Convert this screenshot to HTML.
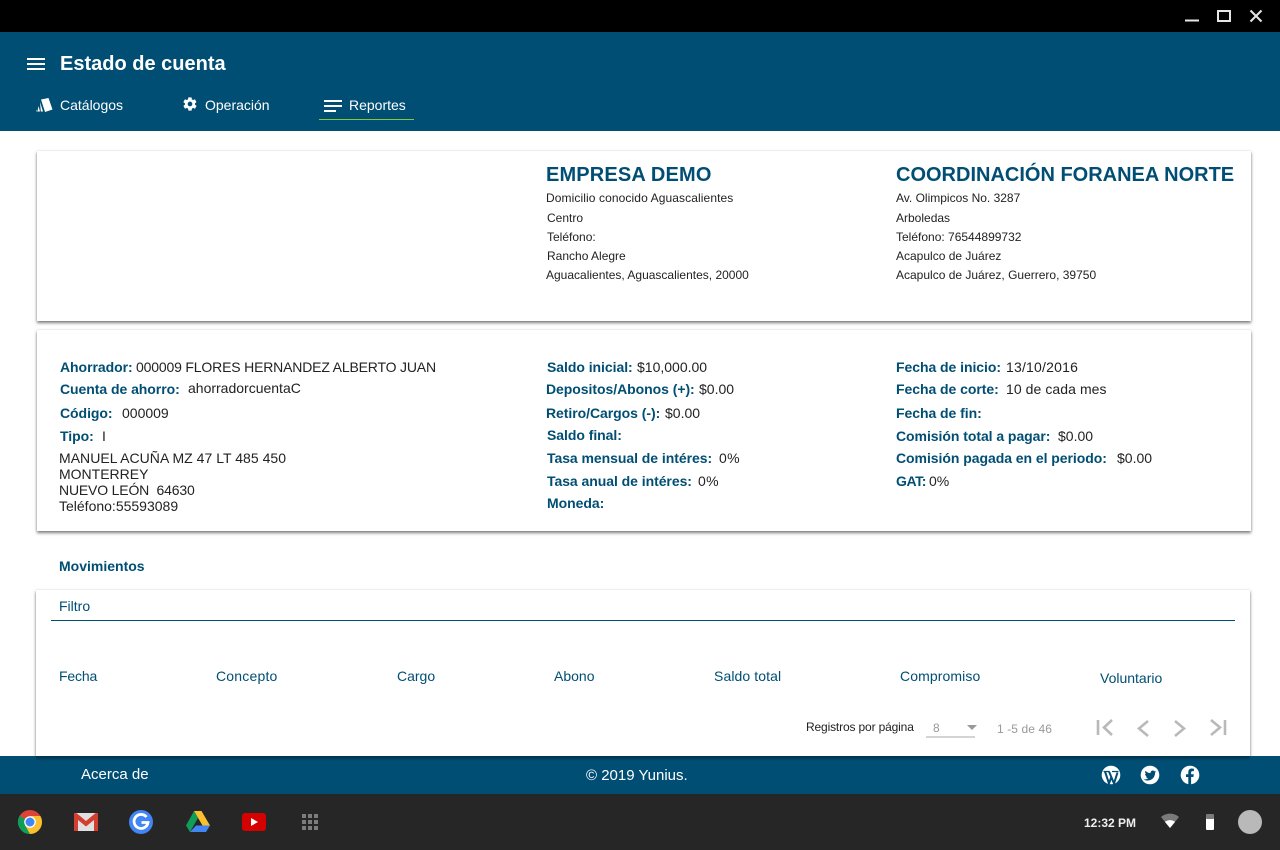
<!DOCTYPE html>
<html lang="es"><head><meta charset="utf-8"><title>Estado de cuenta</title>
<style>
html,body{margin:0;padding:0;width:1280px;height:850px;overflow:hidden;background:#fff;font-family:"Liberation Sans",sans-serif;color:#222}
div,span.a{position:absolute}
.t{position:absolute;white-space:nowrap;line-height:16px;font-size:14px}
.b{font-weight:bold;color:#004e74;letter-spacing:-.05px}
.s{font-size:12px}
.h{font-size:20px;font-weight:bold;color:#004e74;line-height:24px}
.c{color:#004e74}
.w{color:#fff}
.card{background:#fff;box-shadow:0 2px 3px rgba(0,0,0,.5),0 0 2px rgba(0,0,0,.12)}
svg{position:absolute;overflow:visible}
</style></head><body>
<div style="left:0;top:0;width:1280px;height:32px;background:#000"></div>
<svg style="left:0;top:0" width="1280" height="32" fill="none" stroke="#e6e6e6" stroke-width="2"><path d="M1185 20.500h14"/><rect x="1218" y="11" width="12" height="10"/><path d="M1250.500 10.500l11 11M1261.500 10.500l-11 11"/></svg>

<div style="left:0;top:32px;width:1280px;height:99px;background:#004e74"></div>
<svg style="left:0;top:0" width="50" height="80" fill="#fff"><rect x="27" y="58" width="18" height="2"/><rect x="27" y="63" width="18" height="2"/><rect x="27" y="68" width="18" height="2"/></svg>
<span class="t w" style="left:60px;top:52px;font-size:20px;font-weight:bold;line-height:24px">Estado de cuenta</span>
<svg style="left:36px;top:97px" width="18" height="16" fill="#fff"><path d="M5 2.500L12.500 1 16.500 12.500 9 15z"/><path d="M4 5L7 14.500H4.800zM2.500 9L4 14.500H1.500zM.5 12.500L1.500 14.500H.5z"/></svg>
<span class="t w" style="left:60px;top:97px">Catálogos</span>
<svg style="left:182px;top:96px" width="16" height="16" viewBox="0 0 24 24" fill="#fff"><path fill-rule="evenodd" d="M19.400 13c.1-.3.100-.7.100-1s0-.7-.1-1l2.100-1.600c.2-.2.200-.4.100-.6l-2-3.500c-.1-.2-.4-.3-.6-.2l-2.500 1c-.5-.4-1.100-.7-1.700-1l-.4-2.700c0-.2-.2-.4-.5-.4h-4c-.2 0-.5.200-.5.400l-.4 2.700c-.6.200-1.200.6-1.700 1l-2.500-1c-.2-.1-.5 0-.6.200l-2 3.500c-.1.200-.1.500.1.600L4.500 11c0 .3-.1.700-.1 1s0 .7.100 1l-2.100 1.600c-.2.200-.2.400-.1.600l2 3.500c.1.200.4.300.6.200l2.500-1c.5.400 1.100.7 1.700 1l.4 2.700c0 .2.300.4.500.4h4c.3 0 .5-.2.500-.4l.4-2.700c.6-.2 1.200-.6 1.700-1l2.500 1c.2.100.5 0 .6-.2l2-3.500c.1-.2.100-.4-.1-.6zM12 15.500a3.500 3.500 0 1 1 0-7 3.500 3.500 0 0 1 0 7z"/></svg>
<span class="t w" style="left:205px;top:97px">Operación</span>
<svg style="left:324px;top:100px" width="18" height="12" fill="#fff"><rect width="18" height="2"/><rect y="5" width="18" height="2"/><rect y="10" width="12" height="2"/></svg>
<span class="t w" style="left:349px;top:97px">Reportes</span>
<div style="left:319px;top:119px;width:95px;height:1px;background:#8cc63f"></div>

<div class="card" style="left:37px;top:151px;width:1214px;height:170px"></div>
<span class="t h" style="left:546px;top:163px;letter-spacing:.15px">EMPRESA DEMO</span>
<span class="t s" style="left:546px;top:190px;letter-spacing:.1px">Domicilio conocido Aguascalientes</span>
<span class="t s" style="left:547px;top:210px">Centro</span>
<span class="t s" style="left:547px;top:229px">Teléfono:</span>
<span class="t s" style="left:547px;top:248px">Rancho Alegre</span>
<span class="t s" style="left:546px;top:267px">Aguacalientes, Aguascalientes, 20000</span>
<span class="t h" style="left:896px;top:163px">COORDINACIÓN FORANEA NORTE</span>
<span class="t s" style="left:896px;top:190px">Av. Olimpicos No. 3287</span>
<span class="t s" style="left:896px;top:210px">Arboledas</span>
<span class="t s" style="left:896px;top:229px">Teléfono: 76544899732</span>
<span class="t s" style="left:896px;top:248px">Acapulco de Juárez</span>
<span class="t s" style="left:896px;top:267px">Acapulco de Juárez, Guerrero, 39750</span>

<div class="card" style="left:37px;top:330px;width:1214px;height:201px"></div>
<span class="t b" style="left:60px;top:359px">Ahorrador:</span><span class="t" style="left:136px;top:359px;letter-spacing:-.17px">000009 FLORES HERNANDEZ ALBERTO JUAN</span>
<span class="t b" style="left:60px;top:381px">Cuenta de ahorro:</span><span class="t" style="left:188px;top:380px">ahorradorcuentaC</span>
<span class="t b" style="left:60px;top:405px">Código:</span><span class="t" style="left:122px;top:405px">000009</span>
<span class="t b" style="left:60px;top:428px">Tipo:</span><span class="t" style="left:102px;top:428px">I</span>
<span class="t" style="left:59px;top:450px;letter-spacing:.03px">MANUEL ACUÑA MZ 47 LT 485 450</span>
<span class="t" style="left:59px;top:466px">MONTERREY</span>
<span class="t" style="left:59px;top:482px;white-space:pre;letter-spacing:-.17px">NUEVO LEÓN  64630</span>
<span class="t" style="left:59px;top:498px">Teléfono:55593089</span>

<span class="t b" style="left:547px;top:359px">Saldo inicial:</span><span class="t" style="left:637px;top:359px">$10,000.00</span>
<span class="t b" style="left:546px;top:381px">Depositos/Abonos (+):</span><span class="t" style="left:699px;top:381px">$0.00</span>
<span class="t b" style="left:546px;top:405px">Retiro/Cargos (-):</span><span class="t" style="left:665px;top:405px">$0.00</span>
<span class="t b" style="left:547px;top:427px">Saldo final:</span>
<span class="t b" style="left:547px;top:450px">Tasa mensual de intéres:</span><span class="t" style="left:719px;top:450px;letter-spacing:.3px">0%</span>
<span class="t b" style="left:547px;top:473px">Tasa anual de intéres:</span><span class="t" style="left:698px;top:473px;letter-spacing:.3px">0%</span>
<span class="t b" style="left:547px;top:495px">Moneda:</span>

<span class="t b" style="left:896px;top:359px">Fecha de inicio:</span><span class="t" style="left:1006px;top:359px;letter-spacing:.2px">13/10/2016</span>
<span class="t b" style="left:896px;top:381px">Fecha de corte:</span><span class="t" style="left:1006px;top:381px;letter-spacing:.07px">10 de cada mes</span>
<span class="t b" style="left:896px;top:405px">Fecha de fin:</span>
<span class="t b" style="left:896px;top:428px">Comisión total a pagar:</span><span class="t" style="left:1058px;top:428px">$0.00</span>
<span class="t b" style="left:896px;top:450px">Comisión pagada en el periodo:</span><span class="t" style="left:1117px;top:450px">$0.00</span>
<span class="t b" style="left:896px;top:473px;letter-spacing:-.4px">GAT:</span><span class="t" style="left:929px;top:473px">0%</span>

<span class="t b" style="left:59px;top:558px;letter-spacing:0">Movimientos</span>

<div class="card" style="left:36px;top:590px;width:1214px;height:166px"></div>
<span class="t c" style="left:59px;top:598px">Filtro</span>
<div style="left:51px;top:620px;width:1184px;height:1px;background:#004e74"></div>
<span class="t c" style="left:59px;top:668px;letter-spacing:-.15px">Fecha</span>
<span class="t c" style="left:216px;top:668px;letter-spacing:.2px">Concepto</span>
<span class="t c" style="left:397px;top:668px">Cargo</span>
<span class="t c" style="left:554px;top:668px">Abono</span>
<span class="t c" style="left:714px;top:668px;letter-spacing:.1px">Saldo total</span>
<span class="t c" style="left:900px;top:668px;letter-spacing:.1px">Compromiso</span>
<span class="t c" style="left:1100px;top:670px">Voluntario</span>

<span class="t" style="left:806px;top:719px;font-size:12px;color:#222;letter-spacing:-.15px">Registros por página</span>
<span class="t" style="left:933px;top:720px;font-size:12px;color:#999">8</span>
<svg style="left:926px;top:720px" width="50" height="18"><path d="M41 5h10l-5 5z" fill="#999"/><path d="M0 17h49" stroke="#aaa"/></svg>
<span class="t" style="left:997px;top:721px;font-size:12px;color:#999;letter-spacing:.1px">1 -5 de 46</span>
<svg style="left:1090px;top:715px" width="145" height="26" fill="none" stroke="#b9b9b9" stroke-width="2.600"><path d="M8 5v15"/><path d="M22 5l-8 7.500 8 7.500"/><path d="M58 6l-9 7.500 9 7.500"/><path d="M85 6l9 7.500-9 7.500"/><path d="M121 5l9 7.500-9 7.500"/><path d="M135 5v15"/></svg>

<div style="left:0;top:756px;width:1280px;height:38px;background:#004e74"></div>
<div style="left:36px;top:756px;width:1214px;height:5px;background:linear-gradient(#00304a,#004e74)"></div>
<span class="t w" style="left:81px;top:767px;font-size:15px">Acerca de</span>
<span class="t w" style="left:586px;top:768px;font-size:15px">© 2019 Yunius.</span>
<svg style="left:1100px;top:765px" width="110" height="20">
<circle cx="11" cy="10" r="9.300" fill="#fff"/><path d="M3.500 6.500h6M12 6.500h6.500" stroke="#004e74" stroke-width="1.200"/><path d="M5 6.500l4 12 2.200-6M9 6.500l5 12 3.500-11" fill="none" stroke="#004e74" stroke-width="2"/>
<circle cx="50" cy="10" r="9.300" fill="#fff"/><path d="M43.500 14.500c5 2.700 11.500.2 11.600-7l1.300-1.300-1.600.3c-1-1.800-4.300-1.200-4.300 1.600-2 0-3.700-.9-5-2.400-.7 1.300-.3 2.700.7 3.500l-1.200-.3c0 1.300.8 2.300 2 2.600l-1.100.1c.4 1 1.200 1.600 2.400 1.700-1.200.9-2.900 1.300-4.800 1.200z" fill="#004e74"/>
<circle cx="90" cy="10" r="9.300" fill="#fff"/><path d="M88.300 19.500v-7.500h-2.300v-2.800h2.300V7.200c0-2.500 1.500-3.700 3.500-3.700l2.100.2v2.400h-1.300c-1.200 0-1.500.7-1.500 1.500v1.600h2.700l-.4 2.800h-2.300v7.500z" fill="#004e74"/>
</svg>

<div style="left:0;top:794px;width:1280px;height:56px;background:#262626"></div>
<svg style="left:0;top:794px" width="340" height="56">
<circle cx="30" cy="28" r="12" fill="#db4437"/>
<path d="M30 28L19.600 22a12 12 0 0 0 10.400 18z" fill="#0f9d58"/>
<path d="M42 28a12 12 0 0 0-1.600-6H30l-5.200 9L30 40a12 12 0 0 0 12-12z" fill="#fbc02d"/>
<path d="M30 28L24.800 31 30 40a12 12 0 0 1-10.400-18z" fill="#0f9d58"/>
<circle cx="30" cy="28" r="5.800" fill="#fff"/><circle cx="30" cy="28" r="4.500" fill="#4285f4"/>
<rect x="74" y="19" width="24" height="18" rx="1.500" fill="#e0e0e0"/>
<path d="M74 20.500V37h4V26l8 6.500 8-6.500V37h4V20.500c0-1.500-2-2-3-1l-9 7.500-9-7.500c-1-1-3-.5-3 1z" fill="#d23f31"/>
<circle cx="141" cy="28" r="12" fill="#4285f4"/>
<path d="M146.500 23a7 7 0 1 0 1.500 5.500h-6.500" fill="none" stroke="#fff" stroke-width="2.800"/>
<path d="M194 17h7.500l8.500 14.500h-7.500z" fill="#fbc02d"/>
<path d="M194 17l-8 14.500 4 6.500 8-14z" fill="#0f9d58"/>
<path d="M196 31.500h14L206 38h-16z" fill="#4285f4"/>
<rect x="242" y="19" width="24" height="18" rx="3" fill="#d50000"/>
<path d="M251 24l7 4-7 4z" fill="#fff"/>
<g fill="#7d7d7d"><rect x="302" y="20" width="4" height="4"/><rect x="308" y="20" width="4" height="4"/><rect x="314" y="20" width="4" height="4"/><rect x="302" y="26" width="4" height="4"/><rect x="308" y="26" width="4" height="4"/><rect x="314" y="26" width="4" height="4"/><rect x="302" y="32" width="4" height="4"/><rect x="308" y="32" width="4" height="4"/><rect x="314" y="32" width="4" height="4"/></g>
</svg>
<span class="t" style="left:1084px;top:815px;font-size:12px;font-weight:bold;color:#eee">12:32 PM</span>
<svg style="left:1160px;top:812px" width="100" height="22">
<path d="M1 5c5-4.500 13-4.500 18 0l-9 11z" fill="#7a7a7a"/><path d="M5 10c3-2.500 7-2.500 10 0l-5 6z" fill="#fff"/>
<rect x="46" y="4" width="8" height="14" rx="1" fill="#fff"/><rect x="46" y="2" width="8" height="5" rx="1" fill="#7a7a7a"/>
<circle cx="90" cy="10" r="12" fill="#b9b9b9"/>
</svg>
</body></html>
